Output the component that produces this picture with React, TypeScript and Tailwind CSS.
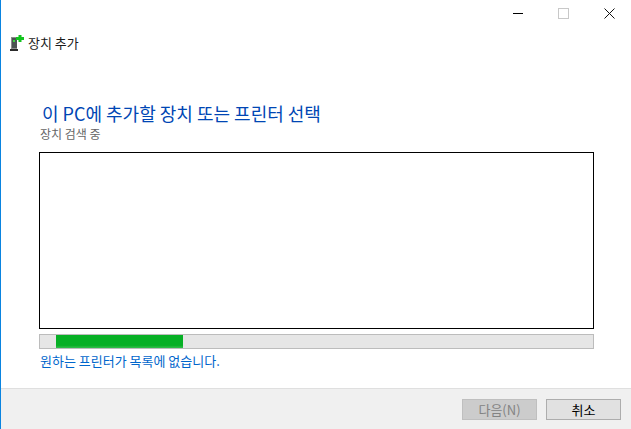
const font = "font-['Noto_Sans_CJK_KR','Noto_Sans',sans-serif]";

function DeviceIcon() {
  return (
    <svg width="14" height="17" viewBox="0 0 14 17" className="shrink-0">
      <rect x="1" y="2" width="6" height="12" fill="#8c8c8c" />
      <rect x="2" y="3" width="5" height="10" fill="#4c5252" />
      <rect x="3" y="5" width="2" height="2" fill="#3fd03f" />
      <rect x="0" y="14" width="8" height="2" fill="#2b2b2b" />
      <path d="M8.500 0h3v2h2.500v3h-2.500v2h-3V5H6V2h2.500z" fill="#12c41e" />
    </svg>
  );
}

export default function App() {
  return (
    <div className={`w-[631px] h-[429px] flex flex-col bg-white border-l border-[#0a84e0] overflow-hidden ${font}`}>
      <div className="h-[26px] mb-[4px] flex justify-end shrink-0">
        <div className="w-[45px] flex items-center justify-center">
          <div className="w-[10px] h-px bg-black" />
        </div>
        <div className="w-[47px] flex items-center justify-center">
          <div className="w-[11px] h-[11px] border border-[#c8c8c8]" />
        </div>
        <div className="w-[44px] flex items-center justify-center">
          <svg width="11" height="11" viewBox="0 0 11 11">
            <path d="M0.5 0.500L10.500 10.500M10.500 0.500L0.5 10.500" stroke="#111" strokeWidth="1" fill="none" />
          </svg>
        </div>
      </div>

      <div className="flex items-center h-[26px] pl-[9px] gap-[4px] shrink-0">
        <DeviceIcon />
        <span className="text-[13px] leading-[16px] text-[#1a1a1a]">장치 추가</span>
      </div>

      <div className="flex-1 flex flex-col pl-[38px] pr-[37px] pt-[45px]">
        <h1 className="text-[18px] leading-[24px] text-[#0046b4] font-normal ml-[3px]">이 PC에 추가할 장치 또는 프린터 선택</h1>
        <p className="text-[12px] leading-[16px] text-[#666] ml-[1px] mt-px">장치 검색 중</p>
        <div className="h-[177px] border border-black bg-white mt-[10px] shrink-0" />
        <div className="h-[15px] mt-[5px] border border-[#bcbcbc] bg-[#e6e6e6] pl-[16px] shrink-0">
          <div className="h-full w-[127px] bg-linear-to-b from-[#06b025] from-80% to-[#2fbf4a]" />
        </div>
        <a className="text-[13px] leading-[18px] text-[#0066cc] mt-[3px] ml-[1px]">원하는 프린터가 목록에 없습니다.</a>
      </div>

      <div className="h-[41px] bg-[#f0f0f0] border-t border-[#dfdfdf] flex items-center justify-end gap-[9px] pr-[10px] shrink-0">
        <button className="w-[75px] h-[21px] bg-[#cccccc] border border-[#bfbfbf] text-[13px] leading-none text-[#838383]">다음(N)</button>
        <button className="w-[75px] h-[21px] bg-[#e1e1e1] border border-[#adadad] text-[13px] leading-none text-black">취소</button>
      </div>
    </div>
  );
}
